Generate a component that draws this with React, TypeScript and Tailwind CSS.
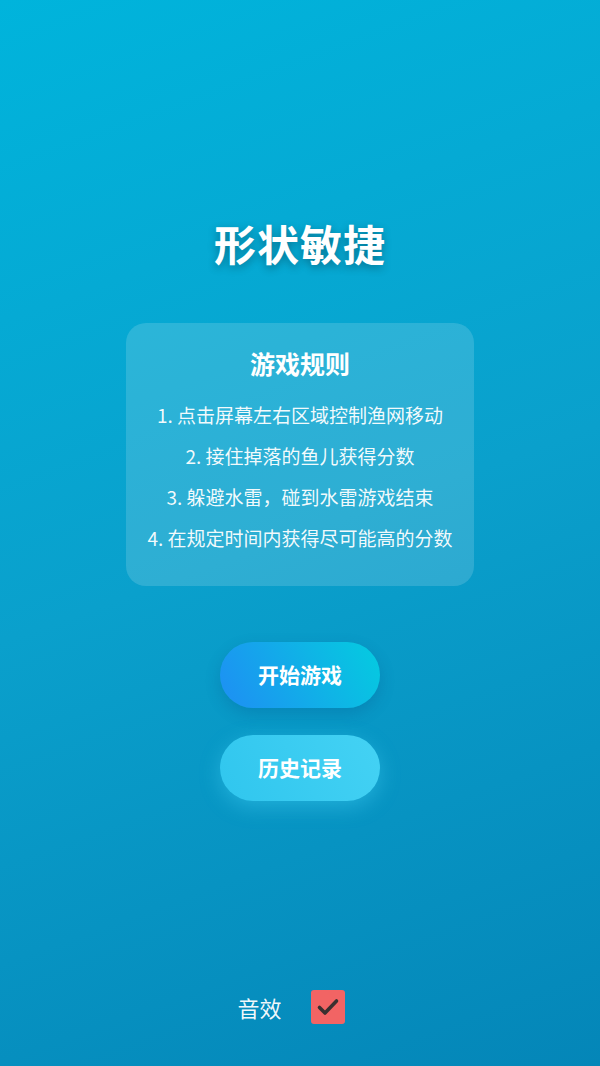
import React, { useState } from 'react';

const rules = [
  '1. 点击屏幕左右区域控制渔网移动',
  '2. 接住掉落的鱼儿获得分数',
  '3. 躲避水雷，碰到水雷游戏结束',
  '4. 在规定时间内获得尽可能高的分数',
];

export default function App() {
  const [sound, setSound] = useState(true);

  return (
    <div
      className="flex h-[1066px] w-full flex-col items-center bg-[linear-gradient(160deg,#00b4dc_0%,#0aa0cc_50%,#0486b8_100%)] text-white"
      style={{ fontFamily: '"Noto Sans CJK SC", "Noto Sans", sans-serif' }}
    >
      <h1 className="mt-[214px] text-[42px] font-bold leading-[58px] tracking-wide [text-shadow:0_3px_8px_rgba(0,0,0,0.3)]">
        形状敏捷
      </h1>

      {/* rules card */}
      <div className="mt-[51px] flex h-[263px] w-[348px] flex-col items-center rounded-[20px] bg-white/15 pt-[22px]">
        <h2 className="text-[25px] font-bold leading-[36px]">游戏规则</h2>
        <ul className="mt-[18px] flex flex-col items-center gap-[9px]">
          {rules.map((r) => (
            <li key={r} className="text-[19px] leading-[32px] text-white/95">
              {r}
            </li>
          ))}
        </ul>
      </div>

      <button className="mt-[56px] h-[66px] w-[160px] rounded-full bg-[linear-gradient(60deg,#1e8ef4_0%,#0fb4e6_60%,#04cce0_100%)] text-[21px] font-bold text-white shadow-[0_6px_16px_rgba(0,60,120,0.2)]">
        开始游戏
      </button>

      <button className="mt-[27px] h-[66px] w-[160px] rounded-full bg-[linear-gradient(60deg,#30c6ee_0%,#44d2f4_100%)] text-[21px] font-bold text-white shadow-[0_6px_20px_rgba(80,220,255,0.35)]">
        历史记录
      </button>

      {/* sound toggle */}
      <div className="mt-auto mb-[42px] flex items-center gap-[29px] pr-[18px]">
        <span className="text-[22px] leading-[30px] text-white/95">音效</span>
        <button
          onClick={() => setSound(!sound)}
          className="flex h-[34px] w-[34px] items-center justify-center rounded-[3px] bg-[#f26464]"
        >
          {sound && (
            <svg width="24" height="24" viewBox="0 0 24 24" fill="none">
              <path
                d="M3.5 12.5l5.5 5.5L20.5 6"
                stroke="#3a3030"
                strokeWidth="3.6"
                strokeLinecap="round"
                strokeLinejoin="round"
              />
            </svg>
          )}
        </button>
      </div>
    </div>
  );
}
